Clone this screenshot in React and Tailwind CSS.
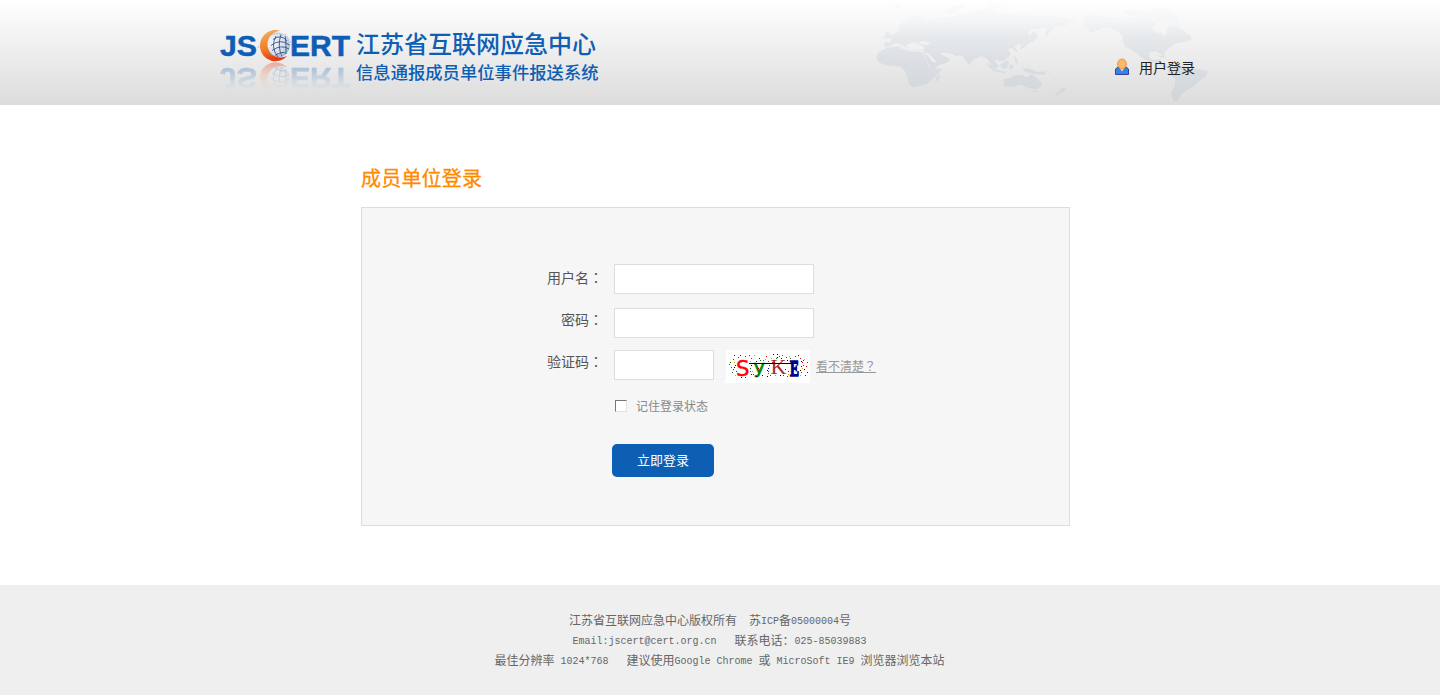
import React from 'react';

const FONT = "font-['Noto_Sans_CJK_SC',sans-serif]";

function WorldMap() {
  return (
    <svg className="absolute top-0 right-0" width="360" height="105" viewBox="0 0 1080 315" aria-hidden="true">
      <defs>
        <linearGradient id="land" x1="0" y1="0" x2="0" y2="315" gradientUnits="userSpaceOnUse">
          <stop offset="0" stopColor="#fcfcfd" />
          <stop offset="0.2" stopColor="#f3f5f6" />
          <stop offset="0.35" stopColor="#e7eaed" />
          <stop offset="0.55" stopColor="#dce0e4" />
          <stop offset="1" stopColor="#cfd4d9" />
        </linearGradient>
      </defs>
      <g fill="url(#land)">
        <path d="M72 138L74 126L92 125L94 114L84 110L100 104L112 94L120 96L114 80L124 68L144 54L164 46L186 52L196 62L214 58L240 54L262 50L290 50L296 38L318 42L346 32L372 24L400 28L420 38L450 42L480 40L510 46L546 44L580 50L620 52L652 64L634 72L626 68L618 76L598 82L584 82L572 92L560 108L554 104L560 88L552 82L536 88L516 88L502 100L512 104L504 122L488 134L474 132L462 140L474 152L468 156L458 144L444 146L452 160L446 172L430 182L414 184L408 176L404 184L416 198L408 206L394 196L382 178L366 168L352 174L340 180L328 196L316 180L304 166L286 168L270 160L248 158L240 166L250 166L272 176L262 188L236 196L224 208L212 206L200 180L190 160L196 152L160 150L140 142L120 132L108 128L96 136L84 142Z" />
        <path d="M80 144L116 138L124 146L150 154L186 156L196 176L210 206L246 206L232 224L216 238L206 248L190 256L158 262L148 254L140 228L134 212L120 200L96 198L78 196L58 188L48 174L54 158Z" />
        <path d="M230 228L242 224L238 238L226 246Z" />
        <path d="M74 98L86 92L98 112L82 116ZM70 110L78 104L82 112L74 118ZM254 38L272 24L306 14L322 20L292 28L276 42ZM380 22L400 12L422 16L432 26ZM96 20L110 14L124 20L110 28Z" />
        <path d="M514 100L526 90L534 108L524 122L508 130L490 144L478 148L484 136L506 120Z" />
        <path d="M378 186L396 198L410 210L440 216L432 220L404 214L388 202ZM420 194L438 180L448 186L440 206L426 206ZM450 192L462 196L456 208L448 208ZM462 164L470 176L476 194L466 186ZM486 204L510 206L532 216L552 214L560 222L540 224L520 222L496 216Z" />
        <path d="M430 238L450 234L464 226L484 224L500 232L514 222L522 226L532 238L546 248L542 260L528 268L504 264L482 254L458 260L434 260ZM520 274L532 272L528 280ZM584 284L600 274L604 264L618 264L608 276L592 286ZM576 234L586 236L582 240Z" />
        <path d="M668 50L690 44L720 46L752 52L786 56L816 52L850 54L878 58L894 66L876 84L886 98L904 98L912 110L920 98L918 82L940 76L966 86L978 98L992 104L996 118L972 126L950 130L930 142L918 152L912 160L918 168L906 166L890 154L870 156L866 172L878 180L892 178L904 186L914 194L928 202L920 204L896 192L870 184L846 174L832 162L814 150L796 140L788 122L788 106L762 88L732 82L706 94L674 100L690 92L682 84L668 76L672 64Z" />
        <path d="M790 34L812 28L840 32L872 34L900 28L934 32L944 44L958 54L948 58L960 76L950 78L936 66L912 70L894 62L884 54L844 50L802 46ZM860 28L900 20L932 26L924 32Z" />
        <path d="M928 206L950 196L976 200L996 208L1018 208L1044 214L1038 228L1020 242L1004 258L982 270L970 278L958 292L952 304L940 302L932 280L944 258L946 238L932 226L922 218ZM890 166L910 168L920 172L904 174Z" />
      </g>
      <g fill="#f0f1f1">
        <path d="M136 134L164 126L176 132L196 144L184 150L150 148ZM172 128L190 122L214 130L196 136Z" />
        <path d="M196 158L202 158L228 184L222 188Z" />
      </g>
    </svg>
  );
}

function Emblem() {
  return (
    <g>
      <circle cx="57" cy="25" r="12.800" fill="url(#globe)" />
      <path d="M60.500 11A15.500 15.500 0 1 0 67 36A13.300 13.300 0 1 1 60.500 11Z" fill="url(#flame)" />
      <g fill="none" stroke="#2b5595" strokeWidth="0.9">
        <path d="M53 19.500Q61 13.500 67 21M51 25.500Q60 18 69.500 25M52 30.500Q61 24 69 29M55 35.500Q62 31 66 33" />
        <path d="M56 16Q50 27 58 37M61 14.500Q57 26 62 36.500M65.500 16.500Q66 26 66 34" />
      </g>
      <path d="M38 28Q48 11 61 14M43 28Q53 41 66 32M65 14Q71 19 72 29" fill="none" stroke="#9daabd" strokeWidth="0.7" strokeDasharray="2 1" />
    </g>
  );
}

function Mark() {
  return (
    <g fill="#0d5eb4" stroke="#0d5eb4" strokeWidth="0.5" fontFamily="'Liberation Sans', sans-serif" fontWeight="700" fontSize="30">
      <text x="0" y="35.700" textLength="37" lengthAdjust="spacingAndGlyphs">JS</text>
      <text x="70" y="35.700" textLength="60" lengthAdjust="spacingAndGlyphs">ERT</text>
      <g stroke="none">
        <Emblem />
      </g>
    </g>
  );
}

function Logo() {
  return (
    <svg width="390" height="85" viewBox="0 0 390 85" role="img">
      <defs>
        <linearGradient id="flame" x1="0" y1="0" x2="0.3" y2="1">
          <stop offset="0" stopColor="#f9b45c" />
          <stop offset="0.6" stopColor="#f47b20" />
          <stop offset="1" stopColor="#e83b14" />
        </linearGradient>
        <radialGradient id="globe" cx="0.35" cy="0.4" r="0.75">
          <stop offset="0" stopColor="#f4f5f7" />
          <stop offset="0.6" stopColor="#d8dee6" />
          <stop offset="1" stopColor="#9cacc6" />
        </radialGradient>
        <linearGradient id="fade" x1="0" y1="42" x2="0" y2="70" gradientUnits="userSpaceOnUse">
          <stop offset="0" stopColor="#fff" stopOpacity="0.36" />
          <stop offset="0.75" stopColor="#fff" stopOpacity="0.06" />
          <stop offset="1" stopColor="#fff" stopOpacity="0" />
        </linearGradient>
        <mask id="reflection" maskUnits="userSpaceOnUse" x="-5" y="40" width="140" height="34">
          <rect x="-5" y="40" width="140" height="34" fill="url(#fade)" />
        </mask>
      </defs>
      <Mark />
      <g mask="url(#reflection)" aria-hidden="true">
        <g transform="matrix(1 0 0 -1 0 83.500)">
          <Mark />
        </g>
      </g>
      <g fill="#0d5eb4" fontFamily="'Noto Sans CJK SC', sans-serif" fontWeight="500">
        <text x="136" y="32.500" fontSize="24" textLength="240">江苏省互联网应急中心</text>
        <text x="136" y="59" fontSize="17.300" textLength="242.500">信息通报成员单位事件报送系统</text>
      </g>
    </svg>
  );
}

function UserIcon() {
  return (
    <svg width="16" height="18" viewBox="0 0 16 18" aria-hidden="true">
      <path d="M1.500 16.500V11L4 9H12L14.500 11V16.500Z" fill="#2f86e0" stroke="#3a3f9e" />
      <path d="M6 10H10L8 14.500Z" fill="#e9effa" />
      <path d="M7.300 12.500H8.700V14H7.300Z" fill="#d9453c" />
      <ellipse cx="8" cy="6" rx="4.400" ry="5" fill="#fdb768" stroke="#e88a2d" strokeWidth="0.8" />
    </svg>
  );
}

const DOTS = [
  ['#e00000', [[8, 9], [24, 5], [20, 6], [15, 5], [31, 11], [41, 6], [47, 12], [61, 7], [63, 21], [77, 12], [81, 16], [28, 24], [45, 25], [70, 6], [33, 18], [11, 21]]],
  ['#0000e0', [[10, 15], [9, 5], [25, 13], [37, 25], [56, 8], [73, 5], [60, 19], [79, 19], [16, 27], [43, 18], [82, 22], [34, 8], [26, 24], [76, 16]]],
  ['#007000', [[5, 12], [7, 22], [8, 19], [35, 10], [44, 15], [58, 25], [65, 8], [76, 22], [25, 18], [51, 8], [20, 27], [80, 25], [43, 21], [78, 10]]],
  ['#f59b00', [[10, 25], [29, 5], [25, 11], [40, 9], [50, 25], [64, 6], [77, 18], [79, 9], [27, 21], [46, 8], [9, 12], [63, 24], [75, 25]]],
  ['#a52a2a', [[6, 17], [13, 7], [26, 8], [25, 21], [38, 10], [43, 23], [54, 6], [62, 26], [75, 8], [78, 15], [4, 14], [43, 11], [57, 5], [82, 12]]],
  ['#000000', [[48, 4], [52, 4], [52, 7], [42, 26], [26, 15], [75, 20], [31, 26], [9, 17], [62, 10], [42, 20], [76, 11], [55, 25]]],
];

function Captcha() {
  return (
    <svg width="85" height="33" viewBox="0 0 85 33" role="img" shapeRendering="crispEdges">
      <path d="M1 0H85V33H0V31H1Z" fill="#fff" />
      <text x="11" y="25.500" fontFamily="'DejaVu Sans', sans-serif" fontSize="21" fill="#f00" stroke="#f00" strokeWidth="0.400" textLength="13.500" lengthAdjust="spacingAndGlyphs">S</text>
      <text x="28.500" y="22.500" fontFamily="'DejaVu Sans', sans-serif" fontSize="17" fill="#008000" stroke="#008000" strokeWidth="0.600" textLength="11.500" lengthAdjust="spacingAndGlyphs">y</text>
      <text x="45.500" y="23.500" fontFamily="'Liberation Serif', serif" fontSize="21" fill="#a52a2a" textLength="16" lengthAdjust="spacingAndGlyphs">K</text>
      <text x="65" y="25.500" fontFamily="'Liberation Serif', serif" fontWeight="700" fontSize="24" fill="#00008b" stroke="#00008b" strokeWidth="1.400" textLength="9" lengthAdjust="spacingAndGlyphs">E</text>
      <path d="M24 13.500H73" stroke="#000" />
      {DOTS.map(([color, points]) =>
        points.map(([x, y]) => <rect key={color + x + '-' + y} x={x} y={y} width="1" height="1" fill={color} />)
      )}
    </svg>
  );
}

function Mono({ children }) {
  return <span className="relative -top-px font-['Liberation_Mono',monospace] text-[10px] whitespace-pre">{children}</span>;
}

function Centered({ children }) {
  return <span className="font-['Noto_Sans_CJK_TC',sans-serif]">{children}</span>;
}

const label = 'mr-px w-[241px] text-right text-sm leading-[28px] text-[#555]';
const field = 'block h-[30px] border border-[#ddd] bg-white px-2 text-sm outline-none';

export default function App() {
  return (
    <div className={`${FONT} h-[695px] w-full overflow-hidden bg-white`}>
      <header className="h-[105px] bg-linear-to-b from-white to-[#dcdcdc]">
        <div className="relative mx-auto flex h-full w-[1000px] justify-between">
          <WorldMap />
          <div className="pt-5">
            <Logo />
          </div>
          <a href="#login" className="relative mt-[58px] flex h-[18px] items-center gap-[9px] pr-[25px] text-sm text-[#222]">
            <UserIcon />
            <span className="leading-[20px]">用户登录</span>
          </a>
        </div>
      </header>

      <main className="flex h-[480px] flex-col pt-[58px] pl-[361px]">
        <h1 className="h-[44px] text-[20px] leading-[29px] tracking-[0.2px] text-[#ff8a00] [-webkit-text-stroke:0.3px_#ff8a00]">成员单位登录</h1>
        <form className="flex h-[319px] w-[709px] flex-col border border-[#ddd] bg-[#f6f6f6] pt-[56px]">
          <div className="flex h-11 gap-[10px]">
            <label className={`${label} -mt-px`}>用户名<Centered>：</Centered></label>
            <input className={`${field} w-[200px]`} />
          </div>
          <div className="flex h-[42px] gap-[10px]">
            <label className={`${label} -mt-[3px]`}>密码<Centered>：</Centered></label>
            <input type="password" className={`${field} w-[200px]`} />
          </div>
          <div className="flex h-[49px]">
            <label className={`${label} -mt-[3px]`}>验证码<Centered>：</Centered></label>
            <input className={`${field} ml-[10px] w-[100px]`} />
            <div className="ml-[11px]">
              <Captcha />
            </div>
            <a href="#captcha" className="ml-[6px] pt-[6px] text-xs leading-[20px] text-[#999] underline">看不清楚<Centered>？</Centered></a>
          </div>
          <div className="ml-[253px] flex h-[45px] items-start gap-[9px]">
            <span className="mt-px size-[12px] border border-t-[#777] border-r-[#e3e3e3] border-b-[#e3e3e3] border-l-[#777] bg-white" />
            <span className="-mt-[3px] text-xs leading-[20px] text-[#888]">记住登录状态</span>
          </div>
          <button type="button" className="ml-[250px] h-[33px] w-[102px] rounded-[5px] bg-[#0d5fb4] pb-0.5 text-[13px] leading-[31px] text-white">立即登录</button>
        </form>
      </main>

      <footer className="h-[110px] bg-[#efefef] pt-[25px] text-xs leading-[20px] text-[#666]">
        <p className="flex h-5 justify-center gap-3 pr-5">
          <span>江苏省互联网应急中心版权所有</span>
          <span>苏<Mono>ICP</Mono>备<Mono>05000004</Mono>号</span>
        </p>
        <p className="flex h-5 justify-center gap-[18px] pr-px">
          <span><Mono>Email:jscert@cert.org.cn</Mono></span>
          <span>联系电话：<Mono>025-85039883</Mono></span>
        </p>
        <p className="flex h-5 justify-center gap-[18px] pr-px">
          <span>最佳分辨率<Mono> 1024*768</Mono></span>
          <span>建议使用<Mono>Google Chrome </Mono>或<Mono> MicroSoft IE9 </Mono>浏览器浏览本站</span>
        </p>
      </footer>
    </div>
  );
}
